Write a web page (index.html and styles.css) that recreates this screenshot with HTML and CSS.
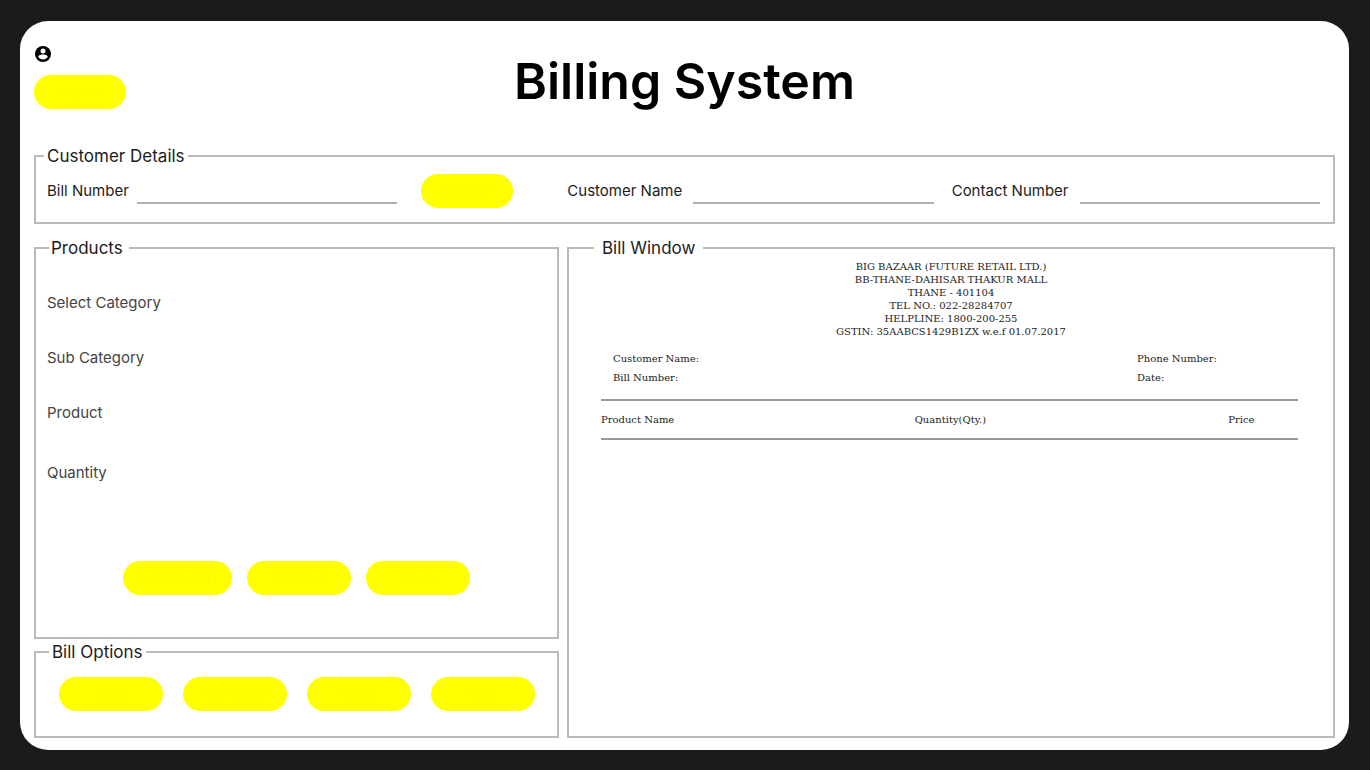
FILE: index.html
```html
<!DOCTYPE html>
<html lang="en">
<head>
<meta charset="utf-8">
<title>Billing System</title>
<link rel="stylesheet" href="styles.css">
</head>
<body>
<main class="card">
  <header class="header">
    <div class="account">
      <svg class="avatar" viewBox="0 0 16 16" aria-hidden="true">
        <circle cx="8" cy="8" r="8" fill="#000"/>
        <circle cx="8" cy="4.900" r="2.500" fill="#fff"/>
        <path d="M3.200 10.800C3.300 9.200 6.300 8.600 8 8.600s4.700.6 4.800 2.200C11.700 12.500 10 13.500 8 13.500s-3.700-1-4.800-2.700z" fill="#fff"/>
      </svg>
      <button class="btn" type="button">Logout</button>
    </div>
    <h1 class="title">Billing System</h1>
  </header>

  <fieldset class="panel customer">
    <legend class="legend">Customer Details</legend>
    <div class="customer-row">
      <label for="bill-no">Bill Number</label>
      <input class="line-input" id="bill-no" type="text">
      <button class="btn search" type="button">Search</button>
      <label for="cust-name">Customer Name</label>
      <input class="line-input" id="cust-name" type="text">
      <label class="contact" for="contact-no">Contact Number</label>
      <input class="line-input" id="contact-no" type="text">
    </div>
  </fieldset>

  <div class="columns">
    <div class="left">
      <fieldset class="panel products">
        <legend class="legend legend-products">Products</legend>
        <div class="field"><label for="category">Select Category</label><select class="plain" id="category"></select></div>
        <div class="field"><label for="subcategory">Sub Category</label><select class="plain" id="subcategory"></select></div>
        <div class="field"><label for="product">Product</label><select class="plain" id="product"></select></div>
        <div class="field field-last"><label for="quantity">Quantity</label><input class="plain" id="quantity" type="text"></div>
        <div class="actions">
          <button class="btn btn-wide" type="button">Add to Cart</button>
          <button class="btn btn-mid" type="button">Remove</button>
          <button class="btn btn-mid" type="button">Clear</button>
        </div>
      </fieldset>
      <fieldset class="panel options">
        <legend class="legend legend-options">Bill Options</legend>
        <div class="option-buttons">
          <button class="btn btn-mid" type="button">Total</button>
          <button class="btn btn-mid" type="button">Generate</button>
          <button class="btn btn-mid" type="button">Clear</button>
          <button class="btn btn-mid" type="button">Exit</button>
        </div>
      </fieldset>
    </div>

    <fieldset class="panel bill">
      <legend class="legend legend-bill">Bill Window</legend>
      <address class="store">
        BIG BAZAAR (FUTURE RETAIL LTD.)<br>
        BB-THANE-DAHISAR THAKUR MALL<br>
        THANE - 401104<br>
        TEL NO.: 022-28284707<br>
        HELPLINE: 1800-200-255<br>
        GSTIN: 35AABCS1429B1ZX w.e.f 01.07.2017
      </address>
      <div class="meta">
        <span>Customer Name:</span><span>Phone Number:</span>
        <span>Bill Number:</span><span>Date:</span>
      </div>
      <table class="items">
        <thead>
          <tr><th class="col-main">Product Name</th><th class="col-main">Quantity(Qty.)</th><th>Price</th></tr>
        </thead>
      </table>
    </fieldset>
  </div>
</main>
</body>
</html>
```
FILE: styles.css
```css
* { box-sizing: border-box; }

body {
  margin: 0;
  min-height: 100vh;
  padding: 21px 21px 20px 20px;
  display: flex;
  background: #1b1b1b;
  color: #1c1c1c;
  font-family: Inter, "Open Sans", sans-serif;
  font-size: 15px;
  line-height: 20px;
}

.card {
  flex: 1;
  display: flex;
  flex-direction: column;
  padding: 24px 14px 12px;
  border-radius: 28px;
  background: #fff;
}

.header {
  display: grid;
  grid-template-columns: 1fr auto 1fr;
  align-items: start;
  padding-bottom: 33px;
}

.account {
  display: flex;
  flex-direction: column;
  align-items: flex-start;
  gap: 13px;
  padding-top: 1px;
}

.avatar { width: 16px; height: 16px; margin-left: 1px; }

.title {
  margin: 0;
  padding-top: 6px;
  color: #000;
  font-size: 50px;
  font-weight: 600;
  line-height: 60px;
}

.btn {
  width: 92px;
  height: 34px;
  padding: 0;
  border: 0;
  border-radius: 17px;
  background: #ffff00;
  color: #fdfd00;
  font: inherit;
}
.btn-mid { width: 104px; }
.btn-wide { width: 109px; }

.panel {
  min-width: 0;
  margin: 0;
  padding: 0;
  border: 2px solid #bababa;
}

.legend {
  margin-left: 8px;
  padding: 0 3px;
  font-size: 17px;
  line-height: 24px;
}
.legend-products { margin-left: 13px; padding: 0 6px 0 2px; }
.legend-options { margin-left: 13px; }
.legend-bill { margin-left: 25px; padding: 0 8px; }

.customer-row {
  display: grid;
  grid-template-columns: 90px minmax(0, 260fr) 170px 126px minmax(0, 240fr) 146px minmax(0, 240fr);
  align-items: center;
  padding: 6px 13px 14px 11px;
}
.search { margin-left: 24px; }
.contact { padding-left: 18px; }

.line-input {
  width: 100%;
  height: 24px;
  padding: 0;
  align-self: end;
  margin-bottom: 4px;
  border: 0;
  border-bottom: 2px solid #b0b0b0;
  background: transparent;
  font: inherit;
}

.columns {
  flex: 1;
  display: grid;
  grid-template-columns: 525fr 768fr;
  gap: 8px;
  margin-top: 12px;
}

.left { display: flex; flex-direction: column; gap: 1px; }

.products { flex: 1; color: #444; }
.products .legend { color: #1c1c1c; margin-bottom: 15px; }

.field {
  display: grid;
  grid-template-columns: 150px 1fr;
  align-items: center;
  height: 55px;
  padding: 0 12px 0 11px;
}
.field-last { height: 65px; }

.plain {
  height: 30px;
  padding: 0;
  border: 0;
  appearance: none;
  background: transparent;
  font: inherit;
}

.actions {
  display: flex;
  justify-content: center;
  gap: 15px;
  margin-top: 56px;
}

.option-buttons {
  display: flex;
  justify-content: center;
  gap: 20px;
  padding: 13px 0 25px;
}

.bill {
  color: #222;
  font-family: "DejaVu Serif", serif;
  font-size: 10px;
}
.bill .legend { font-family: Inter, "Open Sans", sans-serif; }

.store {
  font-style: normal;
  line-height: 13px;
  text-align: center;
}

.meta {
  display: grid;
  grid-template-columns: 524fr 161fr;
  margin: 11px 35px 12px 44px;
  line-height: 19px;
}

.items {
  width: calc(100% - 67px);
  margin-left: 32px;
  border-collapse: collapse;
  table-layout: fixed;
  border-top: 2px solid #999;
  border-bottom: 2px solid #999;
}
.items th {
  height: 39px;
  padding: 0;
  font-weight: 400;
  text-align: left;
}
.col-main { width: 45%; }
```
